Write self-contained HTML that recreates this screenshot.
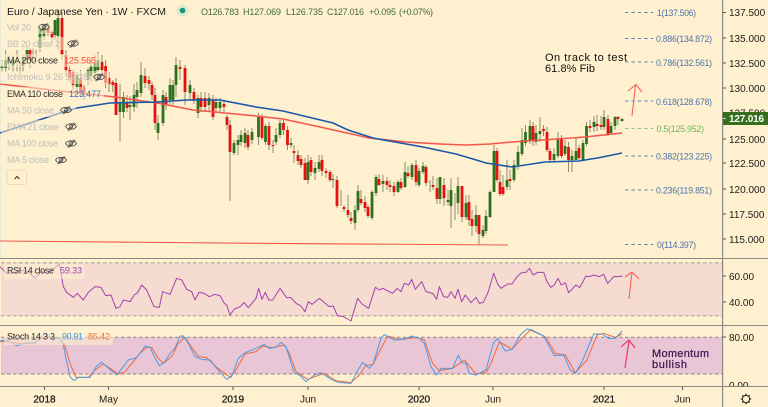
<!DOCTYPE html>
<html><head><meta charset="utf-8"><style>
html,body{margin:0;padding:0;background:#fff1cf;width:768px;height:407px;overflow:hidden}
svg{display:block}
body>svg{filter:blur(.3px)}
text{font-family:"Liberation Sans",sans-serif}
.ax{font-size:10px;fill:#1c1c1c}
.fib{font-size:8.8px;fill:#4d74ad}
.lg{font-size:9px;fill:#bdbdbd}
.ld{font-size:9px;fill:#2a2a2a}
.oh{font-size:9px;fill:#3d6b3b}
.ln{fill:none;stroke-width:3;stroke-linejoin:round}
</style></head><body>
<svg xmlns="http://www.w3.org/2000/svg" width="768" height="407" viewBox="0 0 768 407">
<defs>
<g id="eye" fill="none" stroke="#4a4a4a" stroke-width=".8"><path d="M-5.5 0C-3.5-3.6 3.5-3.6 5.5 0C3.5 3.6-3.5 3.6-5.5 0Z"/><circle r="1.8"/><path d="M-3.5 4L3.5-4M-2.5 4.3L4.5-3.3" stroke-width=".6"/></g>
</defs>
<rect width="768" height="407" fill="#fff1cf"/>
<rect x="0" width="1" height="258" fill="#e8ecd8"/>

<!-- candle wicks -->
<path fill="none" stroke="#8c8c68" stroke-width="1" d="M2 60V72M5.7 50V72M9 56V70M13 55V72M17 50V72M20 62V75M23 55V72M27 46V64M30 48V68M33 48V62M36 50V62M40 28V52M44 25V40M48 24V36M52 30V45M55 20V40M58 10V50M62 12V60M66 50V75M69.6 65V82M73 70V90M77 72V92M80.6 70V97M84 85V100M88 68V85M91 60V82M95 55V80M98 52V72M102 55V75M105.6 60V88M109 72V92M112.8 80V92M116 78V115M120 84V142M123.5 92V118M127 95V112M130 96V120M134 84V112M137 82V108M141 62V97M145 68V88M149 76V90M152 82V100M155 88V130M158 115V140M163 90V126M166 92V110M170 78V105M173 80V105M176 57V97M180 60V80M185 65V105M190 80V100M194 88V104M198 95V118M201 92V112M205 92V112M209 93V112M213 95V120M216 98V112M220 98V112M224 100V112M227 115V130M230 120V201M234 140V155M238 135V155M241 130V146M245 128V148M248 130V150M252 128V144M258.5 113V145M262 114V140M265.5 124V145M269 122V150M273 140V153M276 128V145M280 120V138M283.5 120V135M287.5 126V150M291 138V148M294 145V163M298 150V165M301 155V168M305 158V180M308 155V184M311 157V176M315 162V180M319 155V172M322 155V176M326 168V178M330 170V182M333 174V188M337 176V208M341 190V206M344 205V212M348 195V218M351 212V224M355 205V230M358 185V212M361 190V205M365 196V212M368 205V218M372 190V220M376 175V196M379 174V186M383 175V192M387 177V190M390 180V192M394 182V196M398 180V193M401 178V190M405 162V188M408 166V178M412 163V180M416 160V186M419 168V187M423 162V174M426 165V186M430 180V192M433 176V190M437 178V204M440 177V204M444 178V206M448 190V205M451 178V228M455 193V220M458 177V214M462 186V222M466 195V220M469 195V226M472 210V236M476 205V232M479 215V245M483 225V238M486 210V234M490 190V218M494 145V192M497 148V182M500 170V196M503 175V196M507 160V190M510 170V190M514 160V182M518 146V170M522 128V156M525.5 125V146M530 120V144M533 122V146M536 125V145M540 117V142M543.5 125V136M547 127V152M550 148V162M554 148V162M558 132V158M561.5 135V158M565 140V156M568.5 142V172M572 150V172M576 137V160M579 145V160M583 140V160M586.5 122V146M590 120V132M594 116V132M597 115V131M601 116V130M604 110V130M608 115V136M611 122V135M615 116V130M618 116V125M622 118V122"/>
<!-- green bodies -->
<path fill="none" stroke="#2d7020" stroke-width="2.8" d="M2 66V68M5.7 60V68M13 60V66M23 58V66M27 50V60M40 28V48M44 30V36M55 20V35M58 18V36M77 75V87M88 70V80M91 66V76M95 63V73M98 60V70M120 103V112M123.5 97V112M130 105V107M134 95V107M137 90V97M141 75V93M158 123V133M163 95V123M170 85V100M173 85V100M176 65V85M190 85V93M198 98V113M209 98V105M216 102V108M220 102V108M234 143V153M238 140V145M241 135V142M245 133V143M252 132V140M258.5 116V137M265.5 126V142M276 135V142M280 123V135M291 143V145M308 162V180M315 168V173M319 162V169M333 179V180M355 210V223M358 191V210M372 192V218M376 177V193M383 181V184M398 182V192M405 172V187M412 165V177M419 171V185M423 166V172M440 177V199M448 200V202M451 190V206M458 186V203M466 203V217M476 215V226M483 230V236M486 216V231M490 192V217M494 151V192M507 180V187M514 165V180M518 152V165M522 140V154M525.5 132V143M530 126V141M536 133V142M540 131V134M554 154V160M558 139V156M565 146V154M572 156V160M576 151V160M583 143V160M586.5 126V144M594 122V127M604 117V127M611 126V133M615 117V126M622 119V121"/>
<!-- red bodies -->
<path fill="none" stroke="#e3120f" stroke-width="2.8" d="M30 50V60M48 28V33M52 32V38M62 18V55M66 55V70M69.6 70V78M73 72V85M80.6 78V93M84 87V95M102 62V70M105.6 66V83M109 78V84M112.8 82V85M116 83V115M127 103V108M145 76V83M149 80V84M152 85V95M155 95V123M166 97V105M180 67V69M185 68V92M194 92V100M201 98V107M205 98V107M213 100V117M224 104V107M227 117V125M230 125V152M248 135V147M262 116V138M269 126V145M273 145V146M283.5 123V130M287.5 130V145M294 151V153M298 155V161M301 159V165M305 163V180M311 160V172M322 160V171M326 171V173M330 172V180M337 180V206M344 207V209M348 210V215M351 218V221M361 199V203M365 202V208M368 207V216M379 179V185M387 181V185M390 185V187M394 186V192M401 182V188M408 173V176M416 165V182M426 167V183M433 185V187M437 188V199M444 185V198M462 186V217M469 202V220M472 219V226M479 215V234M497 151V180M500 182V194M503 187V194M510 179V181M533 126V141M543.5 129V131M547 132V150M550 151V160M561.5 138V156M568.5 147V160M579 148V158M590 126V128M597 124V126M601 125V127M608 119V134M618 117V119"/>

<!-- moving averages -->
<path fill="none" stroke="#f4564c" stroke-width="1.5" d="M0 84L60 91L115 97L157 103L193 110L225 113L256 116L283 119L320 127L356 135L369 138L406 142L440 144L466 145L490 144L512 142L550 139.5L585 137L622 133"/>
<path fill="none" stroke="#1a56a8" stroke-width="1.6" d="M0 133L63 112L77 108L110 103L157 102L187 100L220 100L256 107L283 111L333 123L348 130L373 138L423 147L456 154L473 159L486 163L512 167L545 162L579 161L600 157.5L622 153"/>
<path fill="none" stroke="#f4564c" stroke-width="1.1" d="M0 241L256 243.3L508 245"/>

<!-- panes -->
<rect x="1" y="263" width="722" height="53" fill="#f6dbd0"/>
<rect x="1" y="337.5" width="722" height="36.5" fill="#e9c6d6"/>
<g stroke="#a89a9e" stroke-width="1" stroke-dasharray="3.5 2.5"><path d="M1 262.7H723M1 315.7H723"/></g>
<g stroke="#8f8085" stroke-width="1" stroke-dasharray="3.5 2.5"><path d="M1 337.3H723M1 374H723"/></g>

<!-- RSI -->
<polyline class="ln" stroke="#a142ad" transform="translate(0 260) scale(.33333)" points="0,20 20,40 45,38 60,30 85,35 105,55 125,35 145,40 178,12 190,80 200,97 220,112 232,100 250,120 265,97 285,80 303,82 317,107 333,105 348,145 360,140 370,120 390,125 403,105 413,98 425,75 440,90 462,140 478,142 488,95 510,103 530,55 545,60 560,88 575,95 585,120 597,97 612,100 628,110 645,103 660,107 673,130 680,135 690,165 703,147 720,140 733,128 745,143 768,115 776,85 786,118 796,97 806,120 818,120 840,85 860,113 873,113 888,130 903,138 915,155 925,125 936,133 958,115 973,128 988,140 1000,138 1012,167 1030,170 1053,183 1073,115 1086,132 1106,145 1126,82 1138,90 1148,85 1178,100 1191,85 1203,95 1213,70 1226,75 1235,58 1246,88 1265,65 1278,95 1298,100 1310,118 1318,80 1331,110 1343,112 1353,95 1365,115 1374,88 1385,125 1396,105 1413,128 1428,112 1438,130 1450,127 1463,100 1481,40 1493,72 1503,85 1523,72 1536,72 1551,50 1566,37 1578,37 1589,25 1599,45 1614,37 1631,37 1641,65 1653,82 1663,75 1674,55 1684,75 1696,68 1706,98 1728,75 1739,83 1758,48 1768,50 1781,45 1798,50 1811,43 1823,70 1841,50 1854,50 1868,48"/>

<!-- Stoch -->
<polyline class="ln" stroke="#f0683c" transform="translate(0 260) scale(.33333)" points="0,245 20,245 60,250 100,250 135,230 178,235 195,258 210,310 228,352 265,352 285,330 310,312 330,325 355,342 375,335 400,305 420,280 440,262 455,262 475,295 490,310 515,290 535,250 555,232 575,262 595,290 620,293 650,322 690,352 705,335 735,282 768,275 788,258 818,263 853,255 868,280 888,335 923,358 973,340 1008,362 1053,368 1078,345 1098,315 1118,315 1138,275 1163,228 1198,238 1248,233 1273,240 1298,310 1318,332 1358,325 1393,300 1428,342 1458,338 1473,310 1498,245 1536,268 1566,235 1591,210 1636,230 1666,280 1696,285 1726,338 1761,300 1791,225 1811,220 1846,232 1866,222"/>
<polyline class="ln" stroke="#4a9be6" transform="translate(0 260) scale(.33333)" points="0,243 20,240 50,257 80,248 105,250 135,220 160,240 178,232 190,255 200,305 210,350 222,362 235,352 270,352 290,318 305,307 320,320 350,345 370,320 385,300 410,293 435,258 450,262 463,290 478,317 495,305 510,280 525,265 540,228 550,228 565,250 585,290 605,298 630,300 650,325 680,358 695,350 715,295 735,278 768,265 793,253 808,265 828,262 843,247 858,260 883,340 898,345 918,365 943,345 963,338 993,358 1013,367 1053,370 1068,340 1088,307 1108,325 1120,310 1143,235 1153,224 1183,240 1213,238 1235,228 1258,235 1273,250 1293,320 1310,345 1323,325 1358,325 1375,285 1385,308 1398,310 1408,340 1428,345 1458,330 1480,250 1493,235 1516,273 1536,268 1561,225 1581,207 1596,210 1631,228 1663,287 1691,285 1711,330 1726,340 1746,305 1781,222 1806,222 1826,235 1846,235 1866,213"/>

<!-- legend veils -->
<g fill="#fff1cf" fill-opacity=".55">
<rect x="1" y="21" width="52" height="13"/><rect x="1" y="37" width="82" height="13"/><rect x="1" y="54" width="100" height="13"/><rect x="1" y="71" width="108" height="13"/><rect x="1" y="87" width="103" height="13"/><rect x="1" y="104" width="75" height="13"/><rect x="1" y="120" width="80" height="13"/>
</g>
<rect x="4" y="264" width="80" height="15" fill="#fff1cf" fill-opacity=".55"/>
<rect x="4" y="331" width="109" height="14" fill="#fff1cf" fill-opacity=".55"/>

<!-- header legend -->
<text x="7" y="15" font-size="10.5" fill="#1c1c1c" textLength="159" lengthAdjust="spacing">Euro / Japanese Yen · 1W · FXCM</text>
<circle cx="182.5" cy="10.5" r="6" fill="#dfe8cd"/><circle cx="182.5" cy="10.5" r="2.8" fill="#13957c"/>
<text class="oh" x="201" y="15" textLength="38">O126.783</text>
<text class="oh" x="243" y="15" textLength="38">H127.069</text>
<text class="oh" x="286" y="15" textLength="37">L126.735</text>
<text class="oh" x="327" y="15" textLength="37">C127.016</text>
<text class="oh" x="369" y="15" textLength="27">+0.095</text>
<text class="oh" x="399" y="15" textLength="34">(+0.07%)</text>

<text class="lg" x="7" y="30.5" textLength="24">Vol 20</text><use href="#eye" x="44" y="27"/>
<text class="lg" x="7" y="47" textLength="53">BB 20 close 2</text><use href="#eye" x="73" y="43.5"/>
<text class="ld" x="7" y="63.5" textLength="51">MA 200 close</text><text x="64" y="63.5" font-size="9" fill="#f4453f" textLength="32">125.565</text>
<text class="lg" x="7" y="80" textLength="81">Ichimoku 9 26 52 26</text><use href="#eye" x="99" y="77"/>
<text class="ld" x="7" y="97" textLength="56">EMA 110 close</text><text x="69" y="97" font-size="9" fill="#3f6bb0" textLength="32">123.477</text>
<text class="lg" x="7" y="113.5" textLength="47">MA 50 close</text><use href="#eye" x="66" y="110"/>
<text class="lg" x="7" y="130" textLength="52">EMA 21 close</text><use href="#eye" x="71" y="126.5"/>
<text class="lg" x="7" y="146.5" textLength="51">MA 100 close</text><use href="#eye" x="71" y="143.5"/>
<text class="lg" x="7" y="163" textLength="42">MA 5 close</text><use href="#eye" x="61" y="160"/>
<rect x="7" y="170" width="19.5" height="14.5" rx="2" fill="#fff1cf" stroke="#e6dcc0"/>
<path d="M14.5 179L17 176.5L19.5 179" fill="none" stroke="#333" stroke-width="1"/>

<text class="ld" x="7" y="273.5" textLength="47">RSI 14 close</text><text x="60" y="273.5" font-size="9" fill="#a142ad" textLength="22">59.33</text>
<text class="ld" x="7" y="339.5" textLength="48">Stoch 14 3 3</text><text x="62" y="339.5" font-size="9" fill="#3f9be8" textLength="21">90.91</text><text x="88" y="339.5" font-size="9" fill="#f0703a" textLength="22">85.42</text>

<!-- fib -->
<g fill="none" stroke-width="1" stroke-dasharray="3.5 2.9">
<path stroke="#5c84bd" d="M625 12.5H653M625 38.5H653M625 62H653M625 101H653M625 156H653M625 190H653M625 244.5H653"/>
<path stroke="#8fc784" d="M625 128.5H653"/>
</g>
<text class="fib" x="657" y="16" textLength="39">1(137.506)</text>
<text class="fib" x="656" y="42" textLength="56">0.886(134.872)</text>
<text class="fib" x="656" y="66" textLength="56">0.786(132.561)</text>
<text class="fib" x="656" y="105" textLength="56">0.618(128.678)</text>
<text class="fib" x="656.5" y="132" textLength="47.5" style="fill:#6fb563">0.5(125.952)</text>
<text class="fib" x="656" y="159.5" textLength="56">0.382(123.225)</text>
<text class="fib" x="656" y="193.5" textLength="56">0.236(119.851)</text>
<text class="fib" x="657" y="248" textLength="39">0(114.397)</text>

<!-- annotations -->
<text x="545" y="61" font-size="11" fill="#111" textLength="82">On track to test</text>
<text x="545" y="72" font-size="11" fill="#111" textLength="50">61.8% Fib</text>
<g fill="none" stroke="#f4625a" stroke-width="1.1">
<path d="M632 116L635.5 85M628 91L636 84.5L642 92"/>
<path d="M629 299L632 272M625 277L632 272L639 279"/>
</g>
<path d="M625 368L629 341M621 347L629 340L635 348" fill="none" stroke="#e8305a" stroke-width="1.1"/>
<text x="652" y="357" font-size="11" stroke="#3b1a52" stroke-width=".25" fill="#3b1a52" textLength="57">Momentum</text>
<text x="652" y="368" font-size="11" stroke="#3b1a52" stroke-width=".25" fill="#3b1a52" textLength="35">bullish</text>

<!-- separators and axes -->
<path d="M0 258.5H768M0 325.5H768M0 386.5H768" stroke="#8a8a84" stroke-width="1" fill="none"/>
<rect x="722" y="0" width="1.2" height="407" fill="#8a8a84"/>
<path d="M723 12.5h3M723 38h3M723 63h3M723 88h3M723 139h3M723 163h3M723 189h3M723 214h3M723 239h3M723 276h3M723 302h3M723 337h3M44.5 387v3M108.5 387v3M233 387v3M308 387v3M419 387v3M493 387v3M604 387v3M682.5 387v3" stroke="#555" stroke-width="1" fill="none"/>

<g class="ax">
<text class="ax" x="729" y="16">137.500</text>
<text class="ax" x="729" y="42">135.000</text>
<text class="ax" x="729" y="67">132.500</text>
<text class="ax" x="729" y="92">130.000</text>
<text class="ax" x="729" y="116.5">127.500</text>
<text class="ax" x="729" y="143">125.000</text>
<text class="ax" x="729" y="167">122.500</text>
<text class="ax" x="729" y="193">120.000</text>
<text class="ax" x="729" y="218">117.500</text>
<text class="ax" x="729" y="243">115.000</text>
<text class="ax" x="729" y="280">60.00</text>
<text class="ax" x="729" y="306">40.00</text>
<text class="ax" x="729" y="341">80.00</text>
</g>
<svg x="723" y="375" width="45" height="11.2" viewBox="0 0 45 11.2"><text class="ax" x="6" y="14">0.00</text></svg>
<rect x="723" y="112" width="45" height="13" fill="#366f1c"/>
<path d="M723 118.5h3" stroke="#cfe0b8"/>
<text x="729" y="122" font-size="10" font-weight="bold" fill="#fff" textLength="35">127.016</text>

<g font-size="10" fill="#1c1c1c" text-anchor="middle">
<text x="44.5" y="402.5" stroke="#1c1c1c" stroke-width=".3">2018</text>
<text x="108.5" y="402.5">May</text>
<text x="233" y="402.5" stroke="#1c1c1c" stroke-width=".3">2019</text>
<text x="308" y="402.5">Jun</text>
<text x="419" y="402.5" stroke="#1c1c1c" stroke-width=".3">2020</text>
<text x="493" y="402.5">Jun</text>
<text x="604" y="402.5" stroke="#1c1c1c" stroke-width=".3">2021</text>
<text x="682.5" y="402.5">Jun</text>
</g>

<!-- gear -->
<g fill="none" stroke="#222" transform="translate(746 399)">
<circle r="3.6" stroke-width="1"/>
<path stroke-width="1.2" d="M0-3.6V-5.2M0 3.6V5.2M-3.6 0H-5.2M3.6 0H5.2M-2.6-2.6L-3.7-3.7M2.6-2.6L3.7-3.7M-2.6 2.6L-3.7 3.7M2.6 2.6L3.7 3.7"/>
</g>
</svg>
</body></html>
